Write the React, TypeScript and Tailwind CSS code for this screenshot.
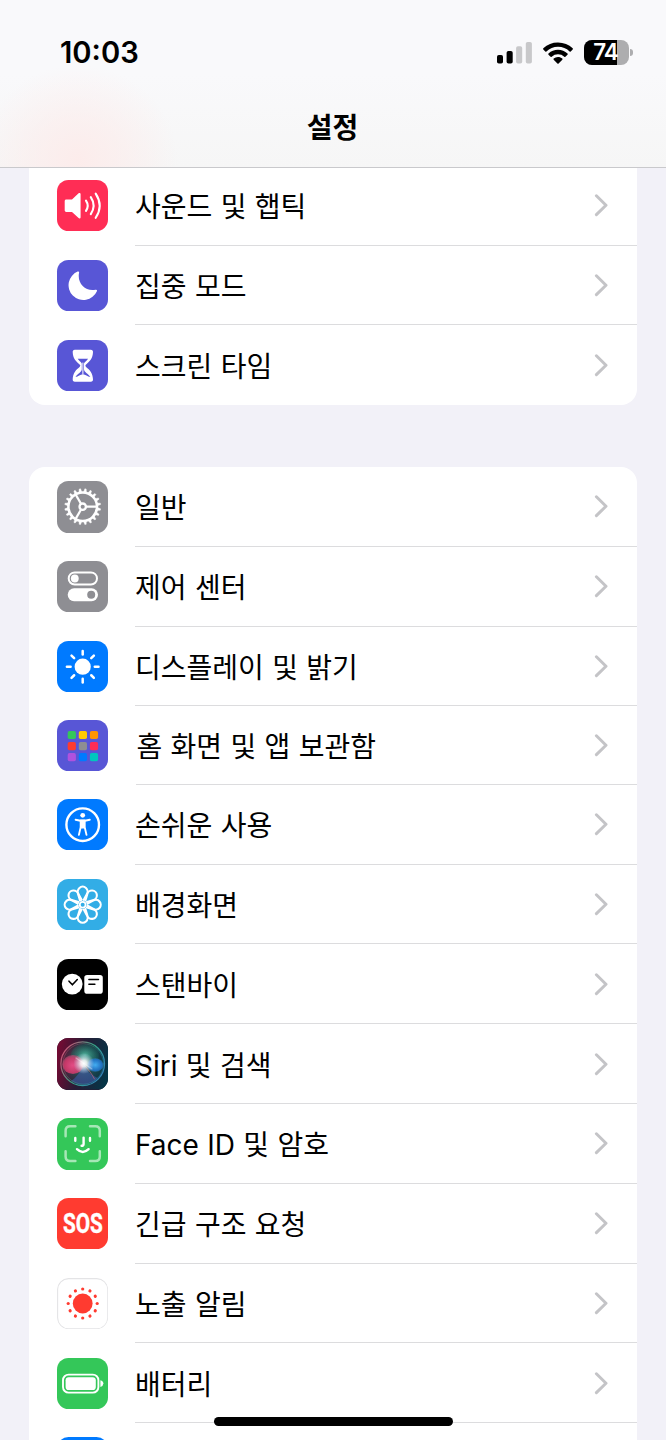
import type { ReactNode } from 'react';
import clsx from 'clsx';

type Item = {
  label: string;
  tile: string;
  icon: ReactNode;
  short?: boolean;
};

const Glyph = ({ children }: { children: ReactNode }) => (
  <svg viewBox="0 0 51.4 51.4" className="block h-full w-full" fill="none" strokeLinecap="round" strokeLinejoin="round">
    {children}
  </svg>
);

const ring = (count: number) => Array.from({ length: count }, (_, i) => (360 / count) * i);

const SoundIcon = () => (
  <Glyph>
    <path d="M9.4 19.4H15l6.6-6.1c.8-.8 2-.4 2 .8v23.2c0 1.2-1.2 1.6-2 .8L15 32H9.4c-1.1 0-1.7-.6-1.7-1.7v-9.2c0-1.1.6-1.7 1.7-1.7z" fill="#fff" />
    <path d="M29 20.6q3.4 5.1 0 10.2M33.8 17.2q5.6 8.5 0 17M38.7 13.6q8 12.1 0 24.2" stroke="#fff" strokeWidth="2.1" />
  </Glyph>
);

const MoonIcon = () => (
  <Glyph>
    <path d="M20.6 11.6c1-.5 1.7 0 1.5.9-2.3 11 6.5 19.4 16.5 17.2 1.2-.2 1.7.4 1.3 1.5A14.8 14.8 0 1 1 20.6 11.6z" fill="#fff" />
  </Glyph>
);

const HourglassIcon = () => (
  <Glyph>
    <path
      d="M17.9 9.7h15.9c1.6 0 2.3.9 2.2 2.4-.2 6.4-3.2 9.4-6.9 12.4-.9.8-.9 1.6 0 2.4 3.7 3 6.7 6 6.9 12.4.1 1.5-.6 2.4-2.2 2.4H17.9c-1.6 0-2.3-.9-2.2-2.4.2-6.4 3.2-9.4 6.9-12.4.9-.8.9-1.6 0-2.4-3.7-3-6.7-6-6.9-12.4-.1-1.5.6-2.4 2.2-2.4z"
      fill="#fff"
    />
    <path d="M20.7 18.8h10.4c-1.1 1.7-3.3 3.1-4.1 4.6v5.8c0 3 4.2 4.2 6.3 7.9-2.8-.2-4.8-2.9-7.4-2.9s-4.6 2.7-7.4 2.9c2.1-3.7 6.3-4.9 6.3-7.9v-5.8c-.8-1.5-3-2.9-4.1-4.6z" fill="#5856d6" />
    <path d="M25.9 23v11" stroke="#fff" strokeWidth="1" />
  </Glyph>
);

const GearIcon = () => (
  <Glyph>
    <g stroke="#fff" strokeLinecap="butt">
      <circle cx="25.7" cy="25.7" r="14.3" strokeWidth="2.5" />
      {ring(20).map(a => (
        <path key={a} d="M40.4 24.3l3.3.7v1.4l-3.3.7z" fill="#fff" strokeWidth=".4" transform={`rotate(${a + 9} 25.7 25.7)`} />
      ))}
      <circle cx="25.7" cy="25.7" r="3.2" strokeWidth="2.3" />
      {ring(3).map(a => (
        <path key={a} d="M29 25.7h10.5" strokeWidth="2.2" transform={`rotate(${a} 25.7 25.7)`} />
      ))}
    </g>
  </Glyph>
);

const TogglesIcon = () => (
  <Glyph>
    <rect x="11.7" y="11.4" width="28.3" height="12.1" rx="6" stroke="#fff" strokeWidth="2" />
    <circle cx="17.8" cy="17.5" r="3.9" fill="#fff" />
    <rect x="10.7" y="27.3" width="30.3" height="12.9" rx="6.4" fill="#fff" />
    <circle cx="34.2" cy="33.7" r="4" fill="#8e8e93" />
  </Glyph>
);

const SunIcon = () => (
  <Glyph>
    <circle cx="25.7" cy="25.7" r="8.1" fill="#fff" />
    {ring(8).map(a => (
      <path key={a} d="M37.8 25.7h3.7" stroke="#fff" strokeWidth="2.5" transform={`rotate(${a} 25.7 25.7)`} />
    ))}
  </Glyph>
);

const appColors = ['#34c759', '#ffcc00', '#ff9500', '#ff3b30', '#8e8e93', '#ff2d55', '#af52de', '#007aff', '#00c7be'];

const HomeIcon = () => (
  <Glyph>
    {appColors.map((c, i) => (
      <rect key={c} x={10.7 + (i % 3) * 11.1} y={10.9 + Math.floor(i / 3) * 11.1} width="8.2" height="8.2" rx="1.8" fill={c} />
    ))}
  </Glyph>
);

const AccessibilityIcon = () => (
  <Glyph>
    <circle cx="25.7" cy="25.7" r="16.3" stroke="#fff" strokeWidth="2.4" />
    <circle cx="25.7" cy="16.3" r="2.4" fill="#fff" />
    <path d="M18.6 20.8l4.9.9h4.4l4.9-.9" stroke="#fff" strokeWidth="1.9" />
    <path d="M23.7 21.5h4v6.6l1.8 7.8M23.7 21.5v6.6l-1.8 7.8" stroke="#fff" strokeWidth="1.9" />
    <path d="M23.4 21.3H28v6.6l-.5 1.7h-3.6l-.5-1.7z" fill="#fff" />
  </Glyph>
);

const WallpaperIcon = () => (
  <Glyph>
    {ring(8).map(a => (
      <path
        key={a}
        d="M24.6 22.8l-2.9-5.4a4.9 4.9 0 1 1 8 0l-2.9 5.4"
        stroke="#fff"
        strokeWidth="2.1"
        transform={`rotate(${a} 25.7 25.7) translate(0 -2)`}
      />
    ))}
    <circle cx="25.7" cy="25.7" r="2.9" stroke="#fff" strokeWidth="1.8" />
  </Glyph>
);

const StandByIcon = () => (
  <Glyph>
    <circle cx="15.2" cy="25.1" r="10.4" fill="#fff" />
    <path d="M12 22.2l3.4 3.6 4.9-5.3" stroke="#000" strokeWidth="1.6" />
    <rect x="27.3" y="15.9" width="18.5" height="18.9" rx="2.8" fill="#fff" />
    <path d="M31.9 20.5h9.6M31.9 25.3h6" stroke="#000" strokeWidth="1.5" />
  </Glyph>
);

const SiriIcon = () => (
  <Glyph>
    <defs>
      <linearGradient id="siriBase" x1="0" y1=".4" x2="1" y2=".6">
        <stop offset="0" stopColor="#710b33" />
        <stop offset=".45" stopColor="#281c35" />
        <stop offset="1" stopColor="#043647" />
      </linearGradient>
      <linearGradient id="siriRing" x1="0" y1=".2" x2="1" y2=".8">
        <stop offset="0" stopColor="#e0527a" />
        <stop offset=".5" stopColor="#37b38d" />
        <stop offset="1" stopColor="#3485c9" />
      </linearGradient>
      <radialGradient id="siriRed" cx=".5" cy=".55" r=".5">
        <stop offset="0" stopColor="#ed4d88" stopOpacity=".95" />
        <stop offset=".8" stopColor="#d93a6e" stopOpacity=".85" />
        <stop offset="1" stopColor="#e04c7c" stopOpacity=".55" />
      </radialGradient>
      <radialGradient id="siriBlue">
        <stop offset="0" stopColor="#43aef2" />
        <stop offset=".8" stopColor="#2375cd" stopOpacity=".9" />
        <stop offset="1" stopColor="#2a86d8" stopOpacity=".5" />
      </radialGradient>
      <radialGradient id="siriGreen">
        <stop offset="0" stopColor="#51b9a0" stopOpacity=".9" />
        <stop offset="1" stopColor="#178069" stopOpacity=".2" />
      </radialGradient>
      <radialGradient id="siriGlow">
        <stop offset="0" stopColor="#fff" />
        <stop offset=".3" stopColor="#fff" stopOpacity=".85" />
        <stop offset="1" stopColor="#c3dcf4" stopOpacity="0" />
      </radialGradient>
    </defs>
    <rect width="51.4" height="51.4" fill="url(#siriBase)" />
    <circle cx="25.7" cy="25.7" r="21" fill="url(#siriGreen)" opacity=".6" />
    <ellipse cx="28" cy="17" rx="14" ry="11" fill="url(#siriGreen)" />
    <path d="M27 27C22 37 16 42 14 43a21 21 0 0 0 27-3c-5-2-11-6-14-13z" fill="#445cae" opacity=".55" />
    <ellipse cx="16" cy="26.5" rx="10.5" ry="9.5" fill="url(#siriRed)" />
    <ellipse cx="38.3" cy="27" rx="8.2" ry="6.8" fill="url(#siriBlue)" />
    <path d="M27 27c4 4 8 9 10.5 14" stroke="#d0677e" strokeWidth=".8" opacity=".8" />
    <circle cx="26.8" cy="25.5" r="10.5" fill="url(#siriGlow)" />
    <path d="M19 20L35 31" stroke="#fff" strokeWidth="1.3" opacity=".35" />
    <circle cx="25.7" cy="25.7" r="21.8" stroke="url(#siriRing)" strokeWidth="1.3" opacity=".9" />
    <circle cx="26.2" cy="25.9" r="20.3" stroke="url(#siriRing)" strokeWidth=".6" opacity=".6" />
  </Glyph>
);

const FaceIdIcon = () => (
  <Glyph>
    <path
      d="M8.6 18.2v-5.4c0-2.9 1.6-4.5 4.5-4.5h5.3M33 8.3h5.3c2.9 0 4.5 1.6 4.5 4.5v5.4M42.8 33.2v5.3c0 2.9-1.6 4.5-4.5 4.5H33M18.4 43h-5.3c-2.9 0-4.5-1.6-4.5-4.5v-5.3"
      stroke="#a6e7b6"
      strokeWidth="2.5"
    />
    <path d="M18.3 20v2.8M33 20v2.8M26.6 19.6v6.3c0 1.3-.6 1.9-2 1.9M20 31.2q5.8 5.6 11.6 0" stroke="#fff" strokeWidth="2.4" />
  </Glyph>
);

const SosIcon = () => (
  <div className="flex h-full items-center justify-center pt-px">
    <span className="scale-x-[0.77] font-['Roboto',sans-serif] text-[27px] leading-none font-bold text-white [-webkit-text-stroke:0.4px_white]">SOS</span>
  </div>
);

const ExposureIcon = () => (
  <Glyph>
    <rect x=".6" y=".6" width="50.2" height="50.2" rx="11" stroke="#e4e4e6" strokeWidth="1.1" />
    <circle cx="25.7" cy="25.5" r="9.9" fill="#ff3b30" />
    {ring(12).map(a => (
      <circle key={a} cx="40.2" cy="25.5" r="1.6" fill="#ff3b30" transform={`rotate(${a} 25.7 25.5)`} />
    ))}
  </Glyph>
);

const BatteryIcon = () => (
  <Glyph>
    <rect x="6" y="16.6" width="35.4" height="18" rx="5.6" stroke="#fff" strokeWidth="1.9" />
    <rect x="8.6" y="19.2" width="30.2" height="12.8" rx="3.1" fill="#fff" />
    <path d="M43.4 22.3q3 .9 3 3.3t-3 3.3z" fill="#fff" />
  </Glyph>
);

const soundGroup: Item[] = [
  { label: '사운드 및 햅틱', tile: 'bg-[#ff2d55]', icon: <SoundIcon /> },
  { label: '집중 모드', tile: 'bg-[#5856d6]', icon: <MoonIcon /> },
  { label: '스크린 타임', tile: 'bg-[#5856d6]', icon: <HourglassIcon /> },
];

const generalGroup: Item[] = [
  { label: '일반', tile: 'bg-[#8e8e93]', icon: <GearIcon /> },
  { label: '제어 센터', tile: 'bg-[#8e8e93]', icon: <TogglesIcon /> },
  { label: '디스플레이 및 밝기', tile: 'bg-[#007aff]', icon: <SunIcon /> },
  { label: '홈 화면 및 앱 보관함', tile: 'bg-[#5856d6]', icon: <HomeIcon />, short: true },
  { label: '손쉬운 사용', tile: 'bg-[#007aff]', icon: <AccessibilityIcon /> },
  { label: '배경화면', tile: 'bg-[#32ade6]', icon: <WallpaperIcon /> },
  { label: '스탠바이', tile: 'bg-black', icon: <StandByIcon /> },
  { label: 'Siri 및 검색', tile: 'bg-[#281c35]', icon: <SiriIcon /> },
  { label: 'Face ID 및 암호', tile: 'bg-[#34c759]', icon: <FaceIdIcon /> },
  { label: '긴급 구조 요청', tile: 'bg-[#ff3b30]', icon: <SosIcon /> },
  { label: '노출 알림', tile: 'bg-white', icon: <ExposureIcon /> },
  { label: '배터리', tile: 'bg-[#34c759]', icon: <BatteryIcon /> },
  { label: '', tile: 'bg-[#007aff]', icon: null },
];

function Row({ item, last }: { item: Item; last: boolean }) {
  return (
    <div className={clsx('flex shrink-0 items-center pl-[28px]', item.short ? 'h-[78.4px]' : 'h-[79.8px]')}>
      <div className={clsx('h-[51.4px] w-[51.4px] shrink-0 overflow-hidden rounded-[11.5px]', item.tile)}>{item.icon}</div>
      <div
        className={clsx(
          'flex h-full flex-1 items-center justify-between pr-[29px]',
          item.short ? 'ml-[28px]' : 'ml-[26.6px]',
          !last && 'border-b border-[#dcdcde]'
        )}
      >
        <span className="pt-1 text-[28px] leading-none whitespace-nowrap text-black [word-spacing:0.5px]">{item.label}</span>
        <svg viewBox="0 0 14 24" className="h-6 w-3.5" fill="none" stroke="#c4c4c7" strokeWidth="3" strokeLinecap="round" strokeLinejoin="round">
          <path d="M2.4 2.8L12 12.2l-9.6 9.4" />
        </svg>
      </div>
    </div>
  );
}

function Group({ items, className }: { items: Item[]; className?: string }) {
  return (
    <section className={clsx('mr-[29px] ml-[29px] flex flex-col bg-white', className)}>
      {items.map((item, i) => (
        <Row key={item.label} item={item} last={i === items.length - 1} />
      ))}
    </section>
  );
}

function StatusBar() {
  return (
    <div className="flex h-[105px] items-center justify-between pr-[33px] pl-[60px]">
      <span className="pt-px font-['Inter',sans-serif] text-[29.2px] leading-none font-semibold">10:03</span>
      <div className="flex items-center">
        <svg viewBox="0 0 35 24" className="h-6 w-[35px]">
          <rect x="0" y="14" width="6" height="8.5" rx="1.8" />
          <rect x="9.6" y="10" width="6.1" height="12.5" rx="1.8" />
          <rect x="19.1" y="5.3" width="6.1" height="17.2" rx="1.8" fill="#c8c8ca" />
          <rect x="28.8" y="1" width="6.1" height="21.5" rx="1.8" fill="#c8c8ca" />
        </svg>
        <svg viewBox="0 0 30 22" className="ml-[11px] h-[22px] w-[30px]">
          <path d="M15 .5c5.6 0 10.8 2.1 14.7 5.8.3.3.3.8 0 1.1l-2 2c-.3.3-.8.3-1.1 0A16.8 16.8 0 0 0 15 4.8c-4.4 0-8.5 1.7-11.6 4.6-.3.3-.8.3-1.1 0l-2-2c-.3-.3-.3-.8 0-1.1A21.3 21.3 0 0 1 15 .5z" />
          <path d="M15 7.8c3.6 0 7 1.4 9.5 3.7.4.3.4.8 0 1.2l-2.1 2c-.3.3-.8.3-1.1 0a9.2 9.2 0 0 0-12.6 0c-.3.3-.8.3-1.1 0l-2.1-2c-.4-.4-.4-.9 0-1.2A14 14 0 0 1 15 7.8z" />
          <path d="M15 15c1.7 0 3.2.6 4.3 1.6.4.3.4.8 0 1.2l-3.7 3.6c-.3.3-.9.3-1.2 0l-3.7-3.6c-.4-.4-.4-.9 0-1.2A6.3 6.3 0 0 1 15 15z" />
        </svg>
        <div className="relative ml-[11px] h-[24.5px] w-[45px] rounded-[8px] bg-[#adadaf]">
          <div className="h-full w-[33.3px] rounded-l-[8px] bg-black" />
          <span className="absolute inset-0 flex items-center justify-center pr-[2px] font-['Inter',sans-serif] text-[22.5px] leading-none font-semibold tracking-[-1px] text-white">
            74
          </span>
        </div>
        <div className="ml-px h-[7px] w-[3px] rounded-r-full bg-[#adadaf]" />
      </div>
    </div>
  );
}

export default function App() {
  return (
    <div className="relative flex h-[1440px] w-[666px] flex-col overflow-hidden bg-[#f2f1f8] font-['Inter','Noto_Sans_CJK_KR',sans-serif]">
      <header className="relative z-10 h-[168px] shrink-0 border-b border-[#c9c9cc] bg-[radial-gradient(ellipse_100px_95px_at_78px_160px,#fceceb_0%,#fceceb99_45%,#fceceb00_100%),linear-gradient(#f9f9fb_0%,#f9f9fb_45%,#f6f6f6_100%)]">
        <StatusBar />
        <h1 className="mt-[9px] pr-px text-center text-[28px] leading-none font-bold">설정</h1>
      </header>

      <main className="-mt-[2.3px] shrink-0">
        <Group items={soundGroup} className="rounded-b-[16px]" />
        <Group items={generalGroup} className="mt-[62px] rounded-t-[16px]" />
      </main>

      {/* Home indicator */}
      <div className="absolute top-[1416.5px] left-[214px] z-20 h-[9.5px] w-[238.5px] rounded-full bg-black" />
    </div>
  );
}
